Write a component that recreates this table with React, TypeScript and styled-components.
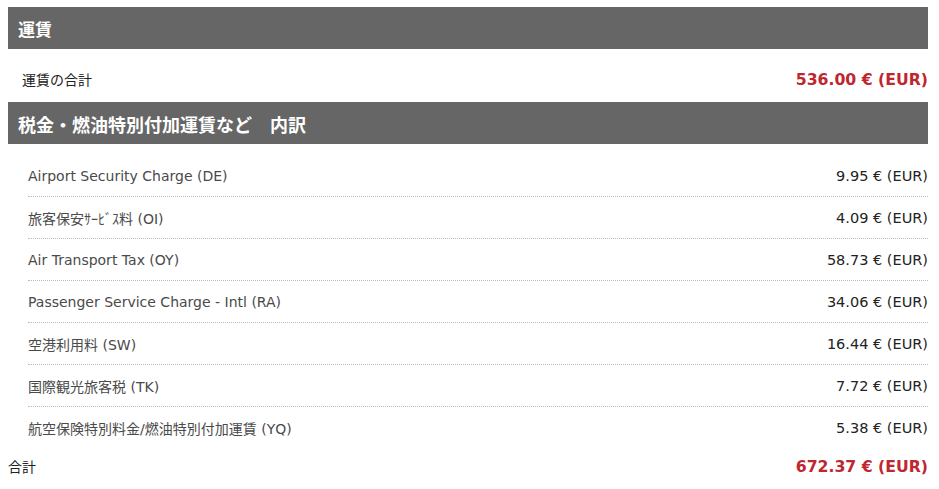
import styled, { createGlobalStyle } from 'styled-components';

const GlobalStyle = createGlobalStyle`
  body {
    margin: 7px 11px 8px 8px;
    font-family: "DejaVu Sans", "Noto Sans CJK JP", sans-serif;
    color: #333;
    background: #fff;
  }
`;

const taxes = [
  { label: 'Airport Security Charge (DE)', amount: '9.95' },
  { label: '旅客保安ｻｰﾋﾞｽ料 (OI)', amount: '4.09' },
  { label: 'Air Transport Tax (OY)', amount: '58.73' },
  { label: 'Passenger Service Charge - Intl (RA)', amount: '34.06' },
  { label: '空港利用料 (SW)', amount: '16.44' },
  { label: '国際観光旅客税 (TK)', amount: '7.72' },
  { label: '航空保険特別料金/燃油特別付加運賃 (YQ)', amount: '5.38' },
];

const App = () => {
  return (
    <>
      <GlobalStyle />
      <Wrapper>
        <SectionHead>運賃</SectionHead>
        <FareRow>
          <FareLabel>運賃の合計</FareLabel>
          <RedAmount>536.00 € (EUR)</RedAmount>
        </FareRow>
        <SectionHead $large>税金・燃油特別付加運賃など　内訳</SectionHead>
        <TaxList>
          {taxes.map((t, i) => (
            <TaxRow key={t.label} $last={i === taxes.length - 1}>
              <TaxLabel>{t.label}</TaxLabel>
              <TaxAmount>{t.amount} € (EUR)</TaxAmount>
            </TaxRow>
          ))}
        </TaxList>
        <TotalRow>
          <TotalLabel>合計</TotalLabel>
          <RedAmount>672.37 € (EUR)</RedAmount>
        </TotalRow>
      </Wrapper>
    </>
  );
};

export default App;

const Wrapper = styled.div`
  width: 920px;
`;

const SectionHead = styled.h2<{ $large?: boolean }>`
  margin: 0;
  height: 42px;
  display: flex;
  align-items: center;
  padding: 1px 0 0 10px;
  box-sizing: border-box;
  background: #666;
  color: #fff;
  font-size: ${({ $large }) => ($large ? '18px' : '17px')};
  font-weight: bold;
`;

const FareRow = styled.div`
  height: 53px;
  display: flex;
  align-items: center;
  justify-content: space-between;
  padding: 7px 0 0 14px;
  box-sizing: border-box;
`;

const FareLabel = styled.span`
  font-size: 14px;
  color: #222;
`;

const RedAmount = styled.span`
  font-size: 15.7px;
  font-weight: bold;
  color: #c0262d;
`;

const TaxList = styled.div`
  padding: 11px 0 0 20px;
`;

const TaxRow = styled.div<{ $last?: boolean }>`
  height: 42px;
  display: flex;
  align-items: center;
  justify-content: space-between;
  box-sizing: border-box;
  border-bottom: ${({ $last }) => ($last ? 'none' : '1px dotted #bbb')};
`;

const TaxLabel = styled.span`
  font-size: 14px;
  color: #4a4a4a;
`;

const TaxAmount = styled.span`
  font-size: 14.5px;
  color: #222;
`;

const TotalRow = styled.div`
  height: 34px;
  display: flex;
  align-items: center;
  justify-content: space-between;
`;

const TotalLabel = styled.span`
  font-size: 14px;
  color: #222;
`;
